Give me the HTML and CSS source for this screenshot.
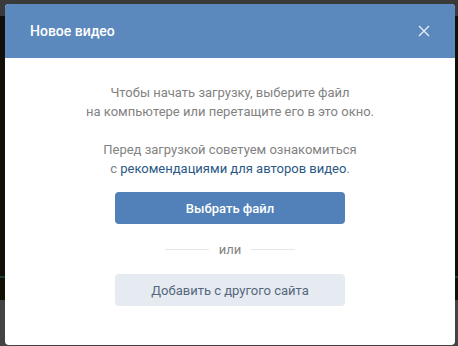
FILE: index.html
```html
<!DOCTYPE html>
<html lang="ru">
<head>
    <meta charset="UTF-8">
    <meta name="viewport" content="width=device-width, initial-scale=1.0">
    <title>Новое видео</title>
    <link rel="stylesheet" href="styles.css">
</head>
<body>
    <!-- Затемнённая страница под окном -->
    <div class="fon">
        <div class="fon-verh"></div>
        <div class="fon-centr"></div>
        <div class="fon-liniya"></div>
        <div class="fon-temno"></div>
        <div class="fon-niz"></div>
    </div>

    <div class="okno">
        <div class="okno-shapka">
            <span class="okno-zagolovok">Новое видео</span>
            <button class="okno-zakryt" aria-label="Закрыть">
                <svg width="12" height="12" viewBox="0 0 12 12">
                    <path d="M1 1 L11 11 M11 1 L1 11" stroke="#fff" stroke-width="1.5" opacity="0.8"/>
                </svg>
            </button>
        </div>
        <div class="okno-telo">
            <p class="tekst">Чтобы начать загрузку, выберите файл<br>на компьютере или перетащите его в это окно.</p>
            <p class="tekst">Перед загрузкой советуем ознакомиться<br>с <a href="#">рекомендациями для авторов видео</a>.</p>
            <button class="knopka knopka-glavnaya">Выбрать файл</button>
            <div class="ili"><span>или</span></div>
            <button class="knopka knopka-vtoraya">Добавить с другого сайта</button>
        </div>
    </div>
</body>
</html>
```

FILE: styles.css
```css
body {
    margin: 0;
    height: 346px;
    overflow: hidden;
    position: relative;
    background: #100f08;
    font-family: Roboto, "Open Sans", sans-serif;
}

/* Фон страницы */
.fon {
    display: flex;
    flex-direction: column;
    height: 100%;
}

.fon-verh {
    height: 16px;
    background: #3a3a3a;
}

.fon-centr {
    height: 260px;
    background: #110f07;
}

.fon-liniya {
    height: 2px;
    background: #1f3a36;
}

.fon-temno {
    height: 22px;
    background: #120f06;
}

.fon-niz {
    flex: 1;
    background: #434343;
}

/* Модальное окно */
.okno {
    position: absolute;
    top: 4px;
    left: 5px;
    width: 450px;
    height: 341px;
    background: #fff;
    border-radius: 4px;
    overflow: hidden;
}

.okno-shapka {
    height: 54px;
    background: #5b88bd;
    display: flex;
    align-items: center;
    justify-content: space-between;
    padding: 0 25px 0 25px;
}

.okno-zagolovok {
    color: #fff;
    font-size: 14px;
    font-weight: 500;
}

.okno-zakryt {
    background: none;
    border: none;
    padding: 0;
    width: 12px;
    height: 12px;
    display: flex;
    cursor: pointer;
}

.okno-telo {
    display: flex;
    flex-direction: column;
    align-items: center;
    padding-top: 25px;
}

.tekst {
    margin: 0 0 19px;
    font-size: 13px;
    line-height: 19px;
    color: #828282;
    text-align: center;
}

.tekst:nth-child(2) {
    margin-bottom: 14px;
}

.tekst a {
    color: #2a5885;
    text-decoration: none;
}

/* Кнопки */
.knopka {
    width: 230px;
    height: 32px;
    border: none;
    border-radius: 4px;
    font-family: inherit;
    font-size: 13px;
    cursor: pointer;
}

.knopka-glavnaya {
    background: #5181b8;
    color: #fff;
    font-weight: 500;
}

.knopka-vtoraya {
    background: #e5ebf1;
    color: #55677d;
}

.ili {
    display: flex;
    align-items: center;
    gap: 10px;
    margin: 16px 0 15px;
    font-size: 13px;
    line-height: 19px;
    color: #828282;
}

.ili::before,
.ili::after {
    content: "";
    width: 44px;
    height: 1px;
    background: #e7e8ec;
}
```
